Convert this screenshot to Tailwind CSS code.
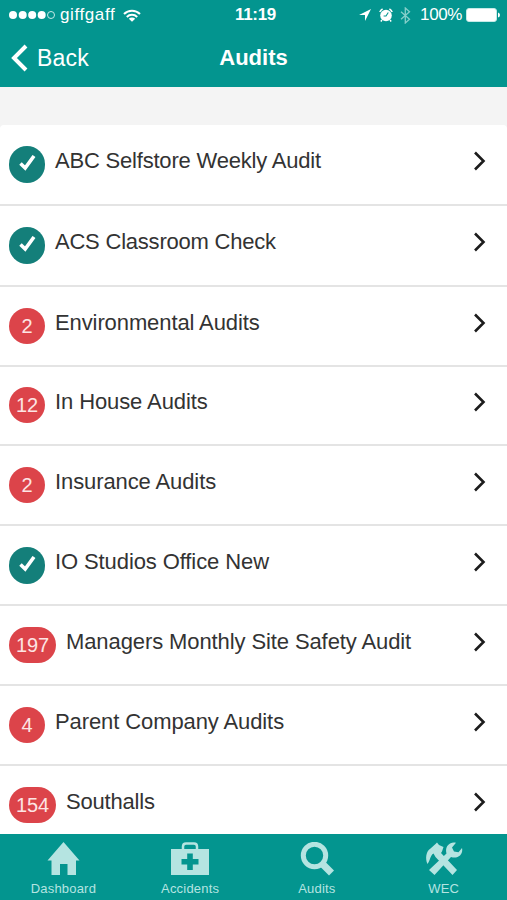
<!DOCTYPE html>
<html lang="en">
<head>
    <meta charset="UTF-8">
    <meta name="viewport" content="width=device-width, initial-scale=1.0">
    <title>Audits</title>
    <script src="https://cdn.jsdelivr.net/npm/@tailwindcss/browser@4"></script>
</head>
<body class="bg-[#f4f4f4] font-['Liberation_Sans',Arial,sans-serif]">
<div class="flex h-[900px] w-[507px] flex-col overflow-hidden">

    <header class="h-[87px] shrink-0 bg-[#03958f] text-white">
        <!-- status bar -->
        <div class="grid h-[30px] grid-cols-3 items-center text-[17px] leading-[30px]">
            <div class="flex items-center pl-[9px]">
                <svg class="h-[10px] w-[47px] shrink-0" viewBox="0 0 47 10" fill="#fff">
                    <circle cx="4" cy="5" r="4"/><circle cx="13.7" cy="5" r="4"/><circle cx="23.2" cy="5" r="4"/><circle cx="32.7" cy="5" r="4"/>
                    <circle cx="42" cy="5" r="3.5" fill="none" stroke="#c5eae7" stroke-width="1"/>
                </svg>
                <span class="ml-[4px] tracking-[0.6px]">giffgaff</span>
                <svg class="ml-[8px] h-[13px] w-[18px] shrink-0" viewBox="0 0 18 13" fill="none" stroke="#fff" stroke-width="2">
                    <path d="M1 5A11.2 11.2 0 0 1 17 5"/><path d="M3.8 8A7.4 7.4 0 0 1 14.2 8"/>
                    <path d="M9 12.8L5.8 9.8A4.5 4.5 0 0 1 12.2 9.8Z" fill="#fff" stroke="none"/>
                </svg>
            </div>
            <div class="pl-[4px] text-center font-bold tracking-[-0.3px]">11:19</div>
            <div class="flex items-center justify-end pr-[7px]">
                <svg class="h-[12px] w-[12px] shrink-0" viewBox="0 0 12 12" fill="#fff"><path d="M12 0L0 6H6V12Z"/></svg>
                <svg class="ml-[8px] h-[14px] w-[14px] shrink-0" viewBox="0 0 14 14">
                    <circle cx="7" cy="7.5" r="5.8" fill="#fff"/>
                    <path d="M.8 4A6 6 0 0 1 3.6 1M10.4 1A6 6 0 0 1 13.2 4M3 12L1.8 13.4M11 12L12.2 13.4" fill="none" stroke="#fff" stroke-width="1.5"/>
                    <path d="M9.3 4.5L7 8H4.6" fill="none" stroke="#03958f" stroke-width="1.1"/>
                </svg>
                <svg class="ml-[7px] h-[17px] w-[11px] shrink-0" viewBox="0 0 11 17" fill="none" stroke="#86cfca" stroke-width="1.3"><path d="M1 4.7L9.500 12.3L5.3 16V1L9.500 4.7L1 12.3"/></svg>
                <span class="ml-[9px] tracking-[-0.4px]">100%</span>
                <svg class="ml-[4px] h-[14px] w-[34px] shrink-0" viewBox="0 0 34 14"><rect x=".5" y=".5" width="30" height="13" rx="2.5" fill="#fff" stroke="#c5eae7"/><path d="M32 4.5Q34 5 34 7T32 9.5Z" fill="#fff"/></svg>
            </div>
        </div>
        <!-- title bar -->
        <div class="grid h-[56px] grid-cols-3 items-center text-[22px] leading-[56px]">
            <div class="flex items-center pl-[11px]">
                <svg class="h-[28px] w-[17px]" viewBox="0 0 17 28" fill="none" stroke="#fff" stroke-width="4"><path d="M15 2L3 14L15 26"/></svg>
                <span class="ml-[9px] text-[23px] tracking-[0.2px]">Back</span>
            </div>
            <h1 class="text-center font-bold">Audits</h1>
        </div>
    </header>

    <main class="mt-[38px] flex-1 overflow-hidden rounded-t-[4px] bg-white text-[22px] tracking-[-0.1px] text-[#333]">
        <a class="flex h-[81px] items-start border-b-2 border-[#e4e4e4] pt-[21px] pr-[21px] pl-[9px]">
            <span class="flex h-[37px] w-[36px] items-center justify-center rounded-full bg-[#147f7a]"><svg class="mb-[3px] h-[16px] w-[17px]" viewBox="0 0 17 16" fill="none" stroke="#fff" stroke-width="3.6"><path d="M1.5 8.5L6.2 13L15 1"/></svg></span>
            <span class="ml-[10px] flex-1 leading-[30px] tracking-[-0.2px]">ABC Selfstore Weekly Audit</span>
            <svg class="mt-[5px] h-[20px] w-[13px]" viewBox="0 0 13 20" fill="none" stroke="#1c1c1c" stroke-width="2.6"><path d="M2 1.5L10.5 10L2 18.5"/></svg>
        </a>
        <a class="flex h-[81px] items-start border-b-2 border-[#e4e4e4] pt-[21px] pr-[21px] pl-[9px]">
            <span class="flex h-[37px] w-[36px] items-center justify-center rounded-full bg-[#147f7a]"><svg class="mb-[3px] h-[16px] w-[17px]" viewBox="0 0 17 16" fill="none" stroke="#fff" stroke-width="3.6"><path d="M1.5 8.5L6.2 13L15 1"/></svg></span>
            <span class="ml-[10px] flex-1 leading-[30px] tracking-[-0.22px]">ACS Classroom Check</span>
            <svg class="mt-[5px] h-[20px] w-[13px]" viewBox="0 0 13 20" fill="none" stroke="#1c1c1c" stroke-width="2.6"><path d="M2 1.5L10.5 10L2 18.5"/></svg>
        </a>
        <a class="flex h-[80px] items-start border-b-2 border-[#e4e4e4] pt-[21px] pr-[21px] pl-[9px]">
            <span class="flex h-[36px] w-[36px] items-center justify-center rounded-full bg-[#dc444a] text-[20px] text-[#fde4e4]">2</span>
            <span class="ml-[10px] flex-1 leading-[30px]">Environmental Audits</span>
            <svg class="mt-[5px] h-[20px] w-[13px]" viewBox="0 0 13 20" fill="none" stroke="#1c1c1c" stroke-width="2.6"><path d="M2 1.5L10.5 10L2 18.5"/></svg>
        </a>
        <a class="flex h-[79px] items-start border-b-2 border-[#e4e4e4] pt-[20px] pr-[21px] pl-[9px]">
            <span class="flex h-[36px] w-[36px] items-center justify-center rounded-full bg-[#dc444a] text-[20px] text-[#fde4e4]">12</span>
            <span class="ml-[10px] flex-1 leading-[30px]">In House Audits</span>
            <svg class="mt-[5px] h-[20px] w-[13px]" viewBox="0 0 13 20" fill="none" stroke="#1c1c1c" stroke-width="2.6"><path d="M2 1.5L10.5 10L2 18.5"/></svg>
        </a>
        <a class="flex h-[80px] items-start border-b-2 border-[#e4e4e4] pt-[21px] pr-[21px] pl-[9px]">
            <span class="flex h-[36px] w-[36px] items-center justify-center rounded-full bg-[#dc444a] text-[20px] text-[#fde4e4]">2</span>
            <span class="ml-[10px] flex-1 leading-[30px]">Insurance Audits</span>
            <svg class="mt-[5px] h-[20px] w-[13px]" viewBox="0 0 13 20" fill="none" stroke="#1c1c1c" stroke-width="2.6"><path d="M2 1.5L10.5 10L2 18.5"/></svg>
        </a>
        <a class="flex h-[80px] items-start border-b-2 border-[#e4e4e4] pt-[21px] pr-[21px] pl-[9px]">
            <span class="flex h-[37px] w-[36px] items-center justify-center rounded-full bg-[#147f7a]"><svg class="mb-[3px] h-[16px] w-[17px]" viewBox="0 0 17 16" fill="none" stroke="#fff" stroke-width="3.6"><path d="M1.5 8.5L6.2 13L15 1"/></svg></span>
            <span class="ml-[10px] flex-1 leading-[30px]">IO Studios Office New</span>
            <svg class="mt-[5px] h-[20px] w-[13px]" viewBox="0 0 13 20" fill="none" stroke="#1c1c1c" stroke-width="2.6"><path d="M2 1.5L10.5 10L2 18.5"/></svg>
        </a>
        <a class="flex h-[80px] items-start border-b-2 border-[#e4e4e4] pt-[21px] pr-[21px] pl-[9px]">
            <span class="flex h-[36px] w-[47px] items-center justify-center rounded-full bg-[#dc444a] text-[20px] text-[#fde4e4]">197</span>
            <span class="ml-[10px] flex-1 leading-[30px]">Managers Monthly Site Safety Audit</span>
            <svg class="mt-[5px] h-[20px] w-[13px]" viewBox="0 0 13 20" fill="none" stroke="#1c1c1c" stroke-width="2.6"><path d="M2 1.5L10.5 10L2 18.5"/></svg>
        </a>
        <a class="flex h-[80px] items-start border-b-2 border-[#e4e4e4] pt-[21px] pr-[21px] pl-[9px]">
            <span class="flex h-[36px] w-[36px] items-center justify-center rounded-full bg-[#dc444a] text-[20px] text-[#fde4e4]">4</span>
            <span class="ml-[10px] flex-1 leading-[30px]">Parent Company Audits</span>
            <svg class="mt-[5px] h-[20px] w-[13px]" viewBox="0 0 13 20" fill="none" stroke="#1c1c1c" stroke-width="2.6"><path d="M2 1.5L10.5 10L2 18.5"/></svg>
        </a>
        <a class="flex h-[80px] items-start pt-[21px] pr-[21px] pl-[9px]">
            <span class="flex h-[36px] w-[47px] items-center justify-center rounded-full bg-[#dc444a] text-[20px] text-[#fde4e4]">154</span>
            <span class="ml-[10px] flex-1 leading-[30px] tracking-[-0.2px]">Southalls</span>
            <svg class="mt-[5px] h-[20px] w-[13px]" viewBox="0 0 13 20" fill="none" stroke="#1c1c1c" stroke-width="2.6"><path d="M2 1.5L10.5 10L2 18.5"/></svg>
        </a>
    </main>

    <nav class="grid h-[66px] shrink-0 grid-cols-4 bg-[#03958f] text-[13px] leading-[16px] tracking-[0.2px] text-[#b5e4e1]">
        <a class="flex flex-col items-center pt-[8px]">
            <svg class="h-[34px] w-[40px]" viewBox="0 0 40 34" fill="#b5e4e1"><path d="M20.500 0L36.500 18.500H33V33H24.500V22H17V33H8.500V18.500H4.500Z"/></svg>
            <span class="mt-[5px]">Dashboard</span>
        </a>
        <a class="flex flex-col items-center pt-[8px]">
            <svg class="h-[34px] w-[40px]" viewBox="0 0 40 34">
                <path d="M13 8V4.500Q13 1.500 16 1.500H24Q27 1.500 27 4.500V8" fill="none" stroke="#b5e4e1" stroke-width="2.500"/>
                <rect x="1" y="7" width="38" height="26" fill="#b5e4e1"/>
                <path d="M17.200 11.500H22.800V17H28.500V22.500H22.800V28H17.200V22.500H11.500V17H17.200Z" fill="#03958f"/>
            </svg>
            <span class="mt-[5px]">Accidents</span>
        </a>
        <a class="flex flex-col items-center pt-[8px]">
            <svg class="h-[34px] w-[40px]" viewBox="0 0 40 34" fill="none" stroke="#b5e4e1"><circle cx="17.500" cy="13.500" r="11.200" stroke-width="5"/><path d="M24.500 21L34.500 31" stroke-width="7"/></svg>
            <span class="mt-[5px]">Audits</span>
        </a>
        <a class="flex flex-col items-center pt-[8px]">
            <svg class="h-[34px] w-[40px]" viewBox="0 0 40 34" fill="#b5e4e1">
                <!-- hammer -->
                <path d="M3.500 22C1 17 2 9 6.500 6.500L11.500 2L13 .5L15 3L19.500 5L18 9.500L17 11L33 28L28.500 33L11.500 15L9.500 11.500C6 13.500 6.500 18 3.500 22Z"/>
                <!-- wrench -->
                <path d="M32 .8L28 5.500L30 9.500L34.500 10.200L38 6C39.500 12 34 17.500 27 15L10.500 33L5 28L22.500 11.500C20.500 5 25.500 -1 32 .8Z"/>
            </svg>
            <span class="mt-[5px]">WEC</span>
        </a>
    </nav>
</div>
</body>
</html>
